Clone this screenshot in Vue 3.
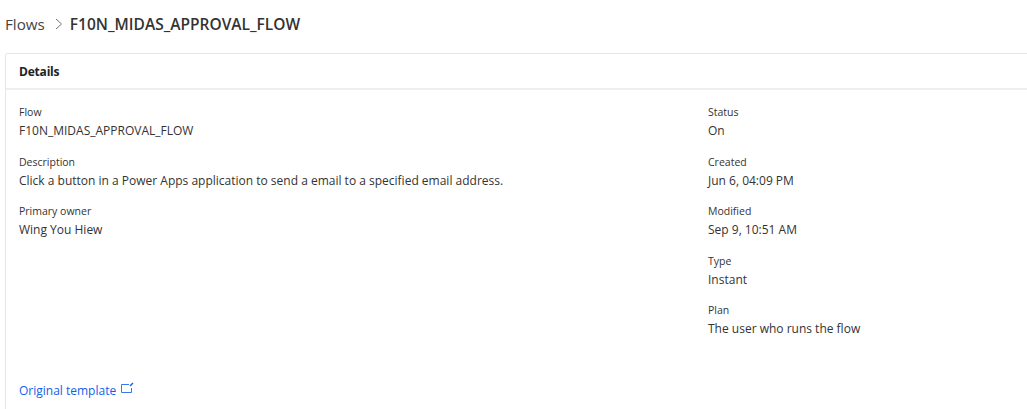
<template>
	<div class="page">
		<nav class="crumbs">
			<span class="crumb-root">Flows</span>
			<svg class="chevron" width="8" height="12" viewBox="0 0 8 12">
				<path d="M1 1l5.5 5L1 11" fill="none" stroke="#777" stroke-width="1" />
			</svg>
			<span class="crumb-current">F10N_MIDAS_APPROVAL_FLOW</span>
		</nav>
		<section class="card">
			<header class="card-head">
				<h2>Details</h2>
				<a class="edit">Edit</a>
			</header>
			<div class="card-body">
				<div class="col-left">
					<div v-for="f in leftFields" :key="f.label" class="field">
						<div class="label">{{ f.label }}</div>
						<div class="value">{{ f.value }}</div>
					</div>
				</div>
				<div class="col-right">
					<div v-for="f in rightFields" :key="f.label" class="field">
						<div class="label">{{ f.label }}</div>
						<div class="value">{{ f.value }}</div>
					</div>
				</div>
			</div>
			<a class="template">
				Original template
				<svg width="14" height="13" viewBox="0 0 14 13">
					<path d="M9 2.5H1.5v8h10V6" fill="none" stroke="#3b78e7" />
					<path d="M10 4l3-3" fill="none" stroke="#0f62e6" stroke-width="1.5" />
				</svg>
			</a>
		</section>
	</div>
</template>

<script setup>
const leftFields = [
	{ label: 'Flow', value: 'F10N_MIDAS_APPROVAL_FLOW' },
	{ label: 'Description', value: 'Click a button in a Power Apps application to send a email to a specified email address.' },
	{ label: 'Primary owner', value: 'Wing You Hiew' },
];

const rightFields = [
	{ label: 'Status', value: 'On' },
	{ label: 'Created', value: 'Jun 6, 04:09 PM' },
	{ label: 'Modified', value: 'Sep 9, 10:51 AM' },
	{ label: 'Type', value: 'Instant' },
	{ label: 'Plan', value: 'The user who runs the flow' },
];
</script>

<style>
html,
body {
	margin: 0;
	background: #fff;
	overflow: hidden;
}
</style>

<style scoped>
.page {
	width: 1027px;
	height: 409px;
	overflow: hidden;
	font-family: 'Open Sans', 'Noto Sans', sans-serif;
	color: #242424;
	box-sizing: border-box;
	padding: 12px 0 0 5px;
}

.crumbs {
	display: flex;
	align-items: center;
	height: 24px;
}

.crumb-root {
	font-size: 15.2px;
	color: #444;
}

.chevron {
	margin: 0 7px 0 10px;
}

.crumb-current {
	font-size: 15.5px;
	font-weight: 600;
	color: #333;
}

.card {
	width: 1100px;
	margin-top: 17px;
	border: 1px solid #e6e6e6;
	border-radius: 2px;
	height: 400px;
	box-sizing: border-box;
}

.card-head {
	display: flex;
	height: 34px;
	align-items: center;
	padding-left: 13px;
	border-bottom: 2px solid #eeeeee;
}

h2 {
	margin: 0;
	font-size: 12px;
	font-weight: 700;
	letter-spacing: -0.2px;
	color: #222;
}

.edit {
	margin-left: 997px;
	font-size: 12px;
	color: #0f62e6;
}

.card-body {
	display: flex;
	padding: 15px 13px 0;
	height: 292px;
	box-sizing: border-box;
}

.col-left {
	width: 689px;
}

.field {
	margin-bottom: 13.5px;
}

.label {
	font-size: 10.5px;
	line-height: 15px;
	color: #333;
}

.value {
	font-size: 12px;
	line-height: 21px;
	color: #333;
}

.template {
	display: flex;
	align-items: flex-start;
	gap: 4px;
	padding-left: 13px;
	font-size: 12px;
	line-height: 18px;
	color: #0f62e6;
}
</style>
